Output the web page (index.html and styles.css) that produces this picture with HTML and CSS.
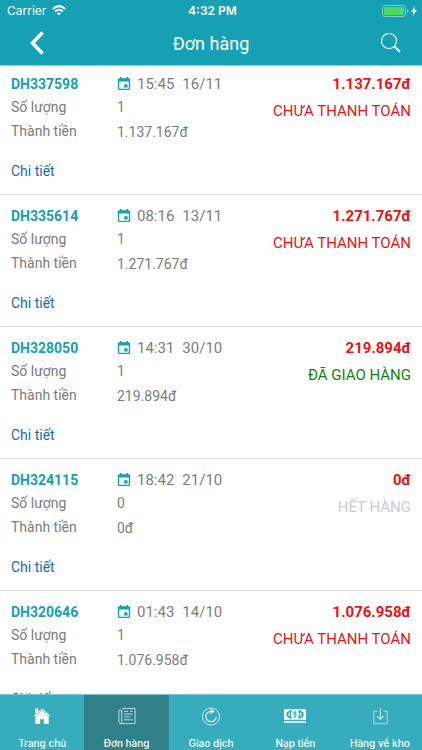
FILE: index.html
```html
<!DOCTYPE html>
<html lang="vi">
<head>
  <meta charset="UTF-8">
  <meta name="viewport" content="width=device-width, initial-scale=1">
  <title>Đơn hàng</title>
  <link rel="stylesheet" href="styles.css">
</head>
<body>

  <svg class="sprite" aria-hidden="true">
    <symbol id="calendar" viewBox="0 0 14 14">
      <path fill="currentColor" fill-rule="evenodd" d="M3 0h1.600v1.300h4.800V0H11v1.300h.8q1.400 0 1.400 1.400v9q0 1.400-1.400 1.400H2.200Q.8 13.100.8 11.700v-9Q.8 1.300 2.200 1.300H3zM2.200 4.600v7.100h9.600V4.600zM7.200 7.300h3.400v3.300H7.200z"/>
    </symbol>
  </svg>

  <header class="header">
    <div class="status-bar">
      <div class="carrier">
        <span>Carrier</span>
        <svg width="14" height="11" viewBox="0 0 14 11" fill="none" stroke="#fff" stroke-width="2">
          <path d="M.8 4Q7-1.800 13.200 4M3.200 6.500Q7 3 10.800 6.500"/>
          <path d="M4.900 8.300Q7 6.500 9.100 8.300L7 10.500z" fill="#fff" stroke="none"/>
        </svg>
      </div>
      <span class="clock">4:32 PM</span>
      <div class="battery">
        <svg width="36" height="12" viewBox="0 0 36 12">
          <rect x=".5" y=".5" width="23" height="11" rx="2.500" fill="none" stroke="#82c9d2"/>
          <rect x="2" y="2" width="20" height="8" rx="1" fill="#4cd964"/>
          <path d="M25 4q1.500.5 1.500 2T25 8z" fill="#82c9d2"/>
          <path d="M33 1l-4 5.500h2.500L30.500 11l4.500-6h-2.600z" fill="#fff"/>
        </svg>
      </div>
    </div>
    <div class="title-bar">
      <button class="icon-btn back" aria-label="Quay lại">
        <svg width="14" height="24" viewBox="0 0 14 24" fill="none" stroke="#fff" stroke-width="3.500">
          <path d="M12.500 1.500L2.500 12l10 10.500"/>
        </svg>
      </button>
      <h1>Đơn hàng</h1>
      <button class="icon-btn search" aria-label="Tìm kiếm">
        <svg width="22" height="22" viewBox="0 0 22 22" fill="none" stroke="#fff">
          <circle cx="9" cy="9" r="7.500" stroke-width="1.100"/>
          <path d="M14.300 14.300L20 20" stroke-width="2"/>
        </svg>
      </button>
    </div>
  </header>

  <main class="orders">
    <article class="order">
      <div class="labels">
        <h2>DH337598</h2>
        <p>Số lượng</p>
        <p>Thành tiền</p>
        <a class="detail" href="#">Chi tiết</a>
      </div>
      <div class="values">
        <div class="date"><svg><use href="#calendar"/></svg><span>15:45</span><span>16/11</span></div>
        <p>1</p>
        <p>1.137.167đ</p>
      </div>
      <div class="summary">
        <strong>1.137.167đ</strong>
        <p class="unpaid">CHƯA THANH TOÁN</p>
      </div>
    </article>

    <article class="order">
      <div class="labels">
        <h2>DH335614</h2>
        <p>Số lượng</p>
        <p>Thành tiền</p>
        <a class="detail" href="#">Chi tiết</a>
      </div>
      <div class="values">
        <div class="date"><svg><use href="#calendar"/></svg><span>08:16</span><span>13/11</span></div>
        <p>1</p>
        <p>1.271.767đ</p>
      </div>
      <div class="summary">
        <strong>1.271.767đ</strong>
        <p class="unpaid">CHƯA THANH TOÁN</p>
      </div>
    </article>

    <article class="order">
      <div class="labels">
        <h2>DH328050</h2>
        <p>Số lượng</p>
        <p>Thành tiền</p>
        <a class="detail" href="#">Chi tiết</a>
      </div>
      <div class="values">
        <div class="date"><svg><use href="#calendar"/></svg><span>14:31</span><span>30/10</span></div>
        <p>1</p>
        <p>219.894đ</p>
      </div>
      <div class="summary">
        <strong>219.894đ</strong>
        <p class="delivered">ĐÃ GIAO HÀNG</p>
      </div>
    </article>

    <article class="order">
      <div class="labels">
        <h2>DH324115</h2>
        <p>Số lượng</p>
        <p>Thành tiền</p>
        <a class="detail" href="#">Chi tiết</a>
      </div>
      <div class="values">
        <div class="date"><svg><use href="#calendar"/></svg><span>18:42</span><span>21/10</span></div>
        <p>0</p>
        <p>0đ</p>
      </div>
      <div class="summary">
        <strong>0đ</strong>
        <p class="sold-out">HẾT HÀNG</p>
      </div>
    </article>

    <article class="order">
      <div class="labels">
        <h2>DH320646</h2>
        <p>Số lượng</p>
        <p>Thành tiền</p>
        <a class="detail" href="#">Chi tiết</a>
      </div>
      <div class="values">
        <div class="date"><svg><use href="#calendar"/></svg><span>01:43</span><span>14/10</span></div>
        <p>1</p>
        <p>1.076.958đ</p>
      </div>
      <div class="summary">
        <strong>1.076.958đ</strong>
        <p class="unpaid">CHƯA THANH TOÁN</p>
      </div>
    </article>
  </main>

  <nav class="tabs">
    <a class="tab" href="#">
      <svg viewBox="0 0 24 20">
        <path d="M4 9.500L12 2.500l8 7" fill="none" stroke="#fff" stroke-width="1.300"/>
        <path d="M5 1.500h3v3L5 7zM5 10l7-6 7 6v8h-5v-5h-4v5H5z" fill="#fff"/>
      </svg>
      <span>Trang chủ</span>
    </a>
    <a class="tab active" href="#">
      <svg viewBox="0 0 24 20" fill="none" stroke="#c4e0e3">
        <path d="M6.500 1.500h14v16h-15q-2 0-2-2v-12h3v12q0 2-1.500 2M9 4.500h4M9 7.500h9M9 10.500h6M9 13.500h9M15 4.500h3"/>
      </svg>
      <span>Đơn hàng</span>
    </a>
    <a class="tab" href="#">
      <svg viewBox="0 0 24 20" fill="none" stroke="#d7eff2">
        <circle cx="12" cy="10" r="9"/>
        <path d="M12 4.500a5.500 5.500 0 1 0 5.500 6" stroke-width="1.300"/>
        <path d="M11.500 1.800l4.500 2.800-4.500 2.700z" fill="#fff" stroke="none"/>
      </svg>
      <span>Giao dịch</span>
    </a>
    <a class="tab" href="#">
      <svg viewBox="0 0 24 20">
        <path d="M.5 2h23v11.500H.500zM.500 15h23v1.500H.500z" fill="#fff"/>
        <g fill="#36acbd">
          <path d="M6 3.500h3.200q-3 4.200 0 8.500H6Q5.500 10.500 3 10V5.500Q5.500 5 6 3.500zM18 3.500h-3.200q3 4.200 0 8.500H18q.5-1.500 3-2V5.500Q18.500 5 18 3.500z"/>
          <path d="M6 6v3.500M18 6v3.500" stroke="#fff" stroke-width="1.400"/>
          <path d="M13.700 5.800Q10.300 4.600 10.300 6.600q0 .8 1.700 1.100t1.700 1.200q0 1.800-3.400.8M12 4v7.500" fill="none" stroke="#36acbd"/>
        </g>
      </svg>
      <span>Nạp tiền</span>
    </a>
    <a class="tab" href="#">
      <svg viewBox="0 0 24 20" fill="none" stroke="#b7e1e7">
        <path d="M9.500 4.500h-4v13h14v-13h-4"/>
        <path d="M12.500 1v11.500M9 9.500l3.500 3.500L16 9.500" stroke-width="1.300"/>
      </svg>
      <span>Hàng về kho</span>
    </a>
  </nav>

</body>
</html>
```

FILE: styles.css
```css
* {
  box-sizing: border-box;
}

body {
  margin: 0;
  height: 100vh;
  display: flex;
  flex-direction: column;
  background: #fff;
  color: #7c7c7c;
  font-family: Roboto, sans-serif;
  font-size: 14px;
}

h1, h2, p {
  margin: 0;
}

a {
  text-decoration: none;
}

.sprite {
  display: none;
}

.header {
  flex: none;
  background: #16a0b3;
  border-bottom: 1px solid #7fd3de;
  color: #fff;
}

.status-bar {
  display: grid;
  grid-template-columns: 1fr auto 1fr;
  align-items: center;
  height: 21px;
  padding: 0 4px 0 7px;
  font-family: Inter, sans-serif;
  font-size: 12px;
}

.carrier {
  display: flex;
  align-items: center;
  gap: 6px;
}

.clock {
  font-weight: 600;
}

.battery {
  display: flex;
  justify-content: flex-end;
}

.title-bar {
  display: grid;
  grid-template-columns: 1fr auto 1fr;
  align-items: center;
  height: 44px;
  padding: 0 20px;
}

.title-bar h1 {
  font-size: 18px;
  font-weight: 400;
}

.icon-btn {
  display: flex;
  padding: 0;
  background: none;
  border: none;
  cursor: pointer;
}

.back {
  padding-left: 10px;
}

.search {
  justify-self: end;
}

.orders {
  flex: 1;
  min-height: 0;
  overflow: hidden;
}

.order {
  display: grid;
  grid-template-columns: 106px 1fr auto;
  padding: 10px 11px 11px;
  border-bottom: 1px solid #dcdcdc;
}

.order:first-child {
  padding-top: 7px;
}

.labels h2 {
  color: #16a0b3;
  font-size: 14px;
  font-weight: 700;
  line-height: 22px;
}

.labels p {
  line-height: 24px;
}

.detail {
  display: block;
  margin-top: 16px;
  color: #1e67b8;
  line-height: 24px;
}

.values p {
  line-height: 25px;
}

.date {
  display: flex;
  align-items: center;
  gap: 8px;
  font-size: 15px;
  line-height: 22px;
}

.date svg {
  width: 14px;
  height: 14px;
  margin-right: -2px;
  color: #16a0b3;
}

.summary {
  font-size: 15px;
  text-align: right;
}

.summary strong {
  display: block;
  color: #f01010;
  line-height: 22px;
}

.summary p {
  line-height: 32px;
}

.unpaid {
  color: #e81414;
}

.delivered {
  color: #128012;
}

.sold-out {
  color: #ccc;
}

.tabs {
  flex: none;
  display: flex;
  height: 56px;
  background: #36acbd;
  border-top: 1px solid #7fc8d2;
}

.tab {
  flex: 1;
  display: flex;
  flex-direction: column;
  align-items: center;
  gap: 10px;
  padding-top: 12px;
  color: #fff;
  font-family: Inter, sans-serif;
  font-size: 10px;
  font-weight: 500;
  line-height: 14px;
}

.tab svg {
  width: 24px;
  height: 20px;
}

.tab.active {
  background: #2f8088;
}
```
